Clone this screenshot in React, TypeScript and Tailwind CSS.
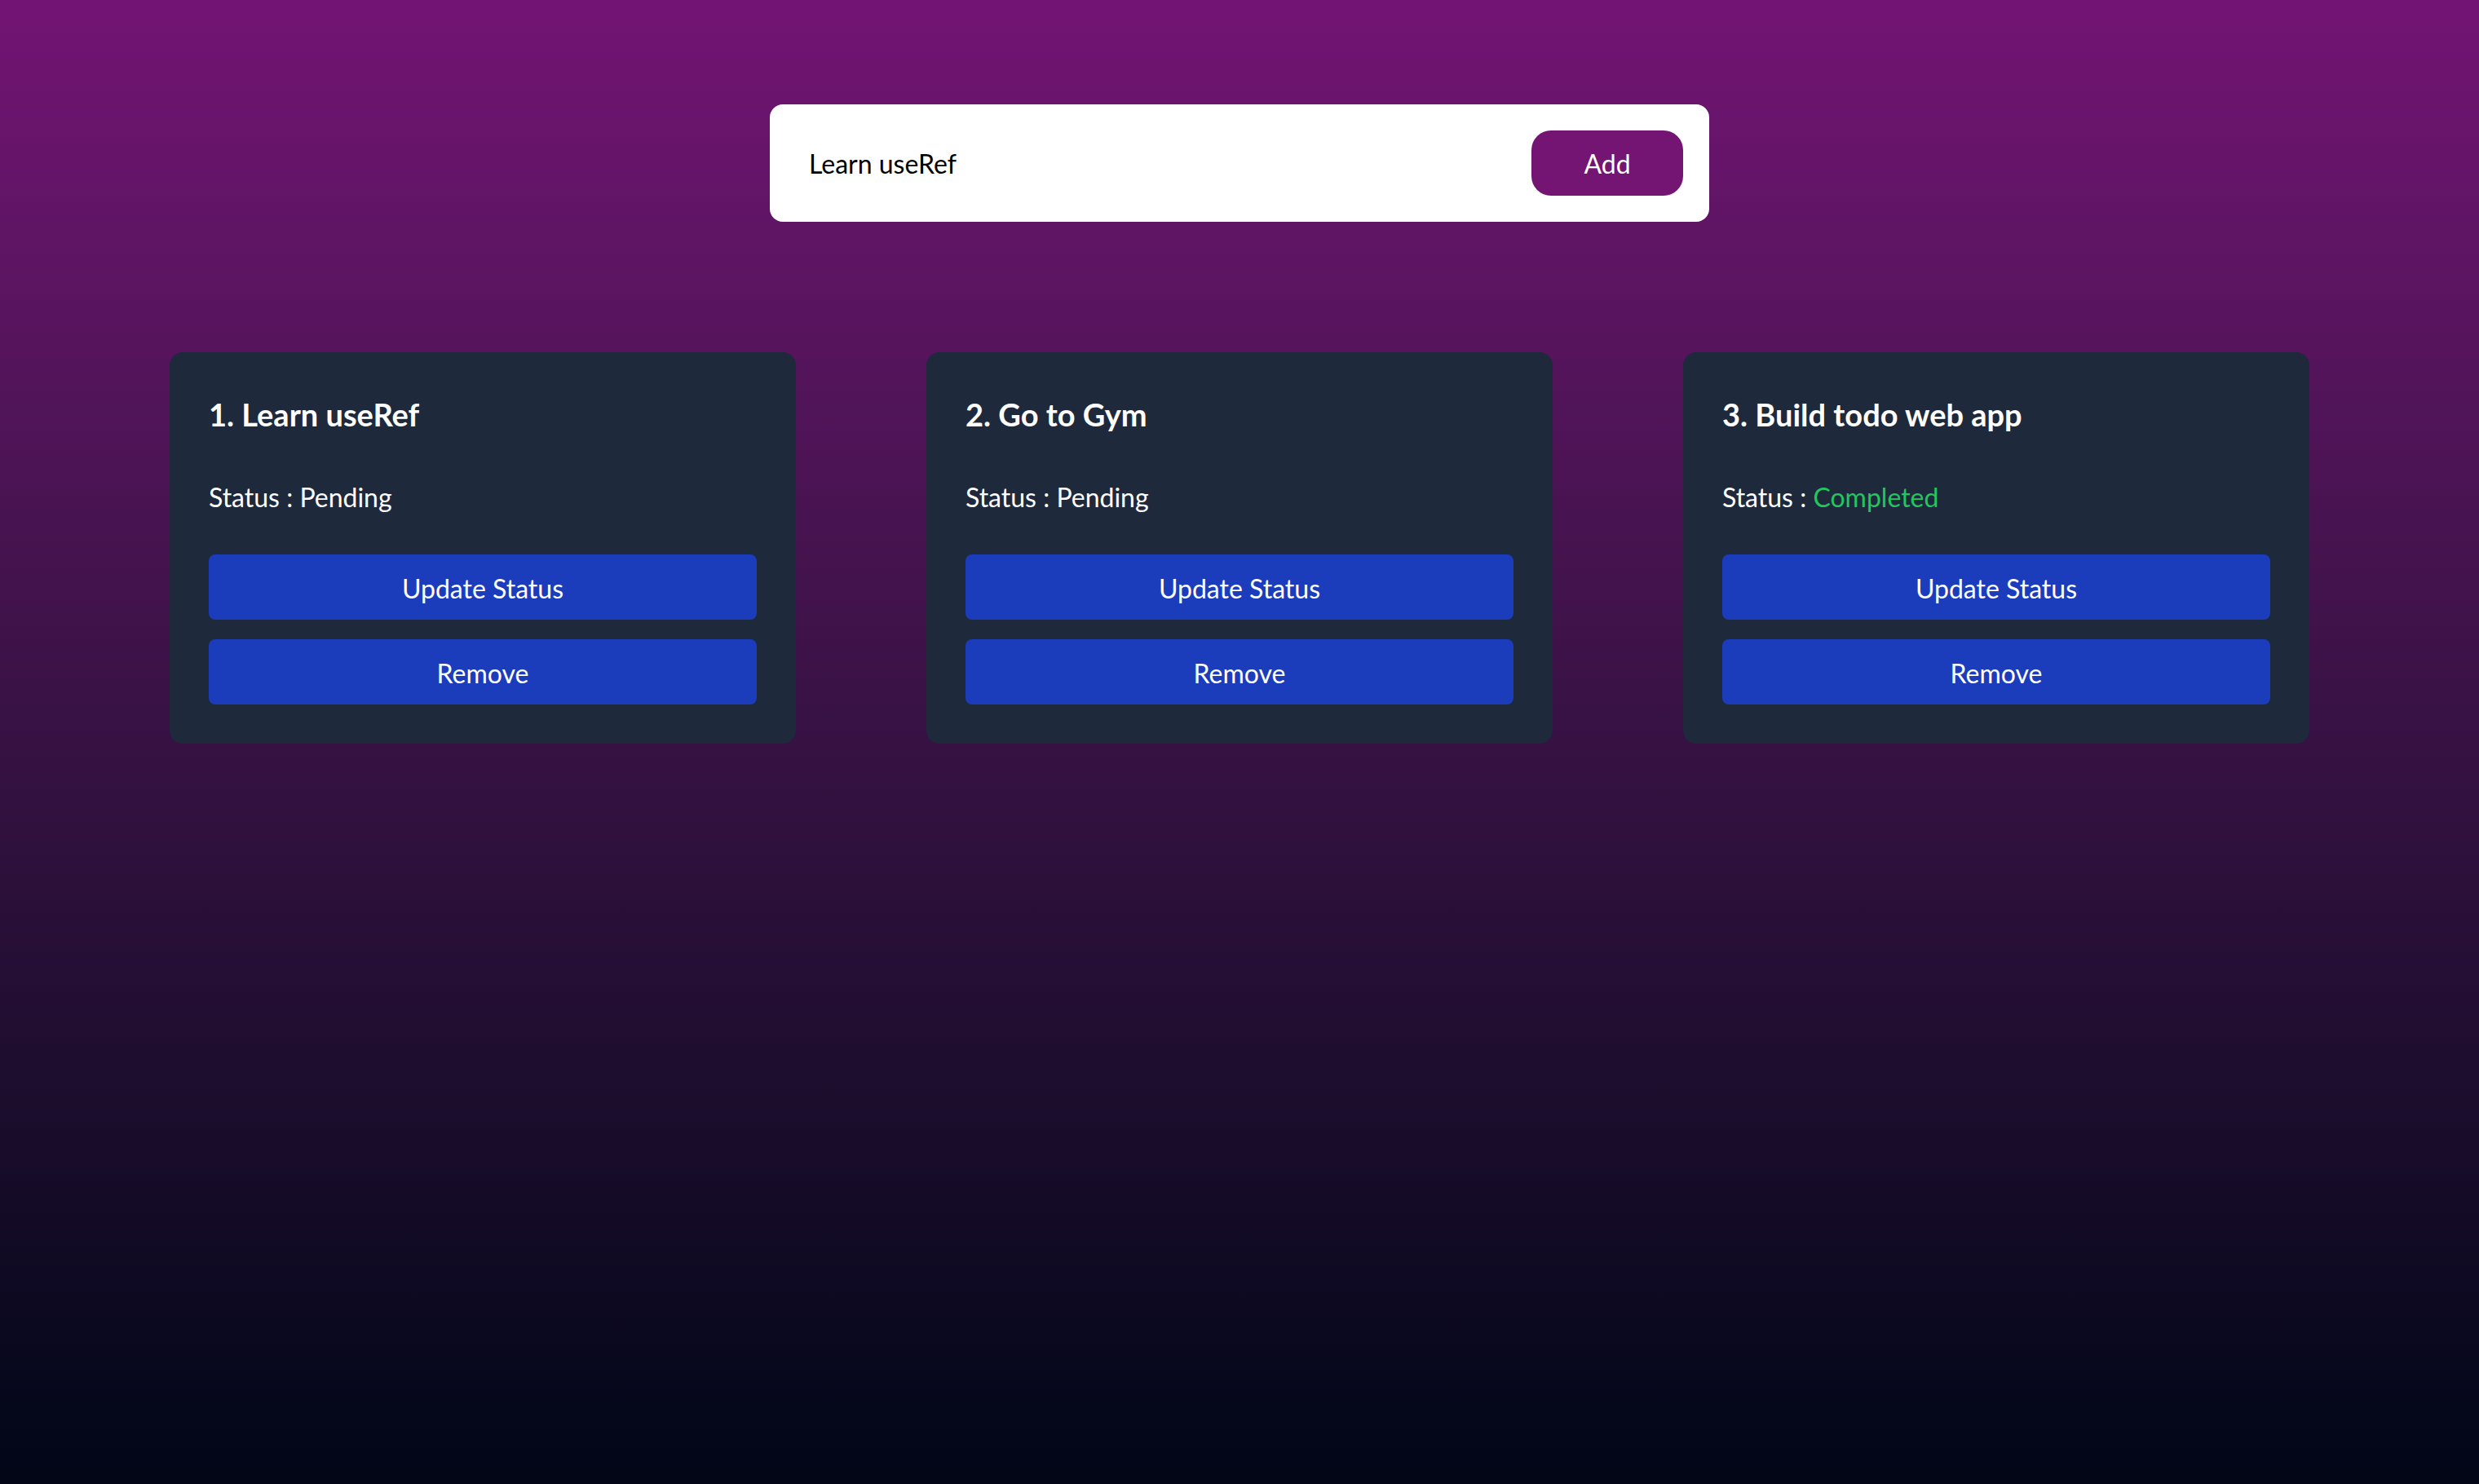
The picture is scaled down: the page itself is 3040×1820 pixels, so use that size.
import React, { useState } from 'react';

type Todo = { id: number; title: string; completed: boolean };

const INITIAL: Todo[] = [
  { id: 1, title: 'Learn useRef', completed: false },
  { id: 2, title: 'Go to Gym', completed: false },
  { id: 3, title: 'Build todo web app', completed: true },
];

function TodoCard({ todo, index, onToggle, onRemove }: {
  todo: Todo;
  index: number;
  onToggle: () => void;
  onRemove: () => void;
}) {
  return (
    <div className="w-[768px] rounded-2xl bg-[#1e293b] p-12 text-white">
      <h2 className="text-[38px] leading-[56px] font-bold">
        {index + 1}. {todo.title}
      </h2>
      <p className="mt-12 pt-[2px] text-[32px] leading-[48px]">
        Status :{' '}
        {todo.completed ? (
          <span className="text-[#22c55e]">Completed</span>
        ) : (
          <span>Pending</span>
        )}
      </p>
      <div className="mt-[46px] flex flex-col gap-6">
        <button
          onClick={onToggle}
          className="h-20 w-full rounded-lg bg-[#1c3dbb] pt-[3px] text-[32px] text-white"
        >
          Update Status
        </button>
        <button
          onClick={onRemove}
          className="h-20 w-full rounded-lg bg-[#1c3dbb] pt-[3px] text-[32px] text-white"
        >
          Remove
        </button>
      </div>
    </div>
  );
}

export default function App() {
  const [todos, setTodos] = useState<Todo[]>(INITIAL);
  const [text, setText] = useState('Learn useRef');

  const addTodo = () => {
    if (!text.trim()) return;
    setTodos([...todos, { id: Date.now(), title: text.trim(), completed: false }]);
    setText('');
  };

  return (
    <div
      className="min-h-screen w-full bg-gradient-to-b from-[#731474] to-[#020617]"
      style={{ fontFamily: '"Segoe UI", Lato, "Noto Sans", sans-serif' }}
    >
      <div className="flex flex-col items-center pt-32">
        {/* Input bar */}
        <div className="flex h-[144px] w-[1152px] items-center rounded-2xl bg-white pl-12 pr-8">
          <input
            value={text}
            onChange={(e) => setText(e.target.value)}
            className="flex-1 bg-transparent pt-[2px] text-[32px] text-black outline-none"
          />
          <button
            onClick={addTodo}
            className="h-[80px] w-[186px] rounded-3xl bg-[#741574] pt-[2px] text-[32px] text-white"
          >
            Add
          </button>
        </div>

        {/* Cards */}
        <div className="mt-40 flex justify-center gap-40">
          {todos.map((todo, i) => (
            <TodoCard
              key={todo.id}
              todo={todo}
              index={i}
              onToggle={() =>
                setTodos(todos.map((t) => (t.id === todo.id ? { ...t, completed: !t.completed } : t)))
              }
              onRemove={() => setTodos(todos.filter((t) => t.id !== todo.id))}
            />
          ))}
        </div>
      </div>
    </div>
  );
}
